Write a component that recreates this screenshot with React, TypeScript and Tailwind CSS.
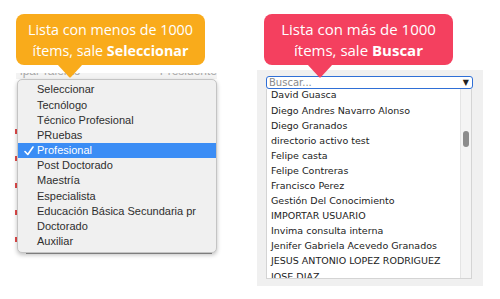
import React from "react"

const leftItems = [
  "Seleccionar",
  "Tecnólogo",
  "Técnico Profesional",
  "PRuebas",
  "Profesional",
  "Post Doctorado",
  "Maestría",
  "Especialista",
  "Educación Básica Secundaria pr",
  "Doctorado",
  "Auxiliar",
]

const rightItems = [
  "David Guasca",
  "Diego Andres Navarro Alonso",
  "Diego Granados",
  "directorio activo test",
  "Felipe casta",
  "Felipe Contreras",
  "Francisco Perez",
  "Gestión Del Conocimiento",
  "IMPORTAR USUARIO",
  "Invima consulta interna",
  "Jenifer Gabriela Acevedo Granados",
  "JESUS ANTONIO LOPEZ RODRIGUEZ",
  "JOSE DIAZ",
]

function Bubble({ orange, line1, plain, bold }: { orange: boolean; line1: string; plain: string; bold: string }) {
  return (
    <div
      className={`relative w-[189px] h-[51px] rounded-[8px] ${orange ? "bg-[#f9ab1b] text-[14.3px]" : "bg-[#f4405f] text-[15px]"} flex flex-col items-center justify-center text-white leading-[21px] font-['Open_Sans',sans-serif]`}
    >
      <div>{line1}</div>
      <div>
        {plain} <span className="font-bold">{bold}</span>
      </div>
      {/* pointer */}
      <div className={`absolute top-[50px] w-[26px] h-[14px] ${orange ? "left-[41px]" : "left-[43px]"}`}>
        <svg width="26" height="14" viewBox="0 0 26 14">
          <path d="M0 0 L26 0 L14 13 Q13 14 12 13 Z" className={orange ? "fill-[#f9ab1b]" : "fill-[#f4405f]"} />
        </svg>
      </div>
    </div>
  )
}

export default function App() {
  return (
    <div className="w-[500px] h-[299px] bg-white flex items-start overflow-hidden">
      {/* Left: native select with fewer than 1000 items */}
      <div className="ml-[16px] w-[201px] pt-[14px] flex flex-col relative">
        <div className="relative z-10">
          <Bubble orange line1="Lista con menos de 1000" plain="ítems, sale" bold="Seleccionar" />
        </div>

        {/* form row behind the dropdown */}
        <div className="mt-[8px] h-[6px] overflow-hidden bg-[#f3f3f3] flex gap-[48px] pl-[4px] text-[12px] text-[#a8a8a8] font-['Liberation_Sans',sans-serif]">
          <span className="-mt-[9px] leading-[14px]">ipal Talento Humano</span>
          <span className="-mt-[9px] leading-[14px]">Presidente T</span>
        </div>

        <div className="relative">
          <div className="absolute -left-[1px] top-[50px] flex flex-col gap-[22px]">
            <div className="w-[2px] h-[5px] bg-[#e24a4a]" />
            <div className="w-[2px] h-[5px] bg-[#e24a4a]" />
            <div className="w-[2px] h-[5px] bg-[#e24a4a]" />
            <div className="w-[2px] h-[5px] bg-[#e24a4a]" />
            <div className="w-[2px] h-[5px] bg-[#e24a4a]" />
          </div>
          <div className="relative ml-[1px] h-[174px] rounded-[5px] bg-[#f0f0f0] border border-[#c4c4c4] shadow-[0_2px_4px_rgba(0,0,0,0.25)] pt-[2px] font-['Liberation_Sans',sans-serif] text-[11px] text-[#2e2e2e]">
            {leftItems.map((item) =>
              item === "Profesional" ? (
                <div key={item} className="h-[15.2px] bg-[#3b8df5] text-white flex items-center pl-[19px] relative">
                  <svg className="absolute left-[6px] top-[3px]" width="10" height="10" viewBox="0 0 10 10">
                    <path d="M1 5.5 L3.8 8.5 L9 1" stroke="white" strokeWidth="1.6" fill="none" strokeLinecap="round" strokeLinejoin="round" />
                  </svg>
                  {item}
                </div>
              ) : (
                <div key={item} className="h-[15.2px] flex items-center pl-[19px]">
                  {item}
                </div>
              )
            )}
          </div>
          <div className="ml-[10px] w-[186px] h-[1px] bg-[#9a9a9a]" />
        </div>
      </div>

      {/* Right: searchable list with more than 1000 items */}
      <div className="ml-[40px] w-[226px] flex flex-col relative">
        <div className="relative z-10 ml-[7px] mt-[14px]">
          <Bubble orange={false} line1="Lista con más de 1000" plain="ítems, sale" bold="Buscar" />
        </div>
        <div className="mt-[5px] h-[216px] bg-[#f0f0f0] pt-[6px] pl-[9px] pr-[10px]">
          <div className="h-[13px] rounded-[3px] border-[1.5px] border-[#2f6fd6] bg-white flex items-center justify-between pl-[2px] pr-[3px] font-['DejaVu_Sans',sans-serif] text-[10px] text-[#8a8a8a]">
            <span className="leading-[10px]">Buscar...</span>
            <span className="text-[8px] text-[#222] leading-[8px]">▼</span>
          </div>
          <div className="h-[190px] mr-[1px] bg-white border border-[#d4d4d4] border-t-0 overflow-hidden flex">
            <div className="flex-1 -mt-[1px] pl-[4px] font-['DejaVu_Sans',sans-serif] text-[9.5px] text-[#222]">
              {rightItems.map((item) => (
                <div key={item} className="h-[15.1px] flex items-center whitespace-nowrap">
                  {item}
                </div>
              ))}
            </div>
            <div className="w-[11px] bg-[#f4f4f4] border-l border-[#e4e4e4] pt-[42px] flex justify-center">
              <div className="w-[6px] h-[16px] rounded-full bg-[#8c8c8c]" />
            </div>
          </div>
        </div>
      </div>
    </div>
  )
}
